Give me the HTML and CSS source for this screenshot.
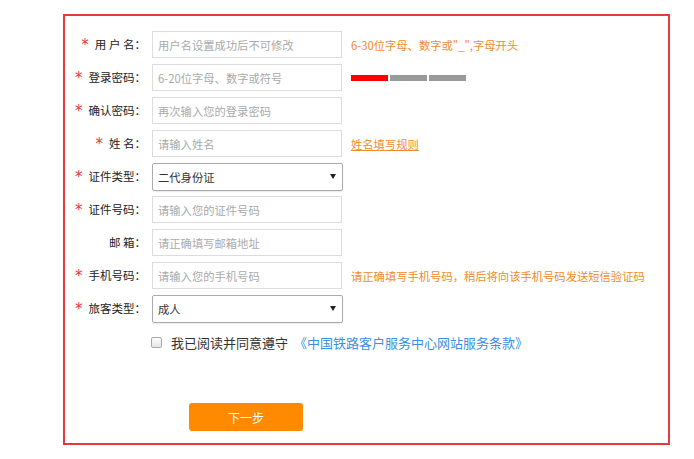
FILE: index.html
```html
<!DOCTYPE html>
<html lang="zh-CN">
<head>
<meta charset="utf-8">
<title>注册</title>
<link rel="stylesheet" href="styles.css">
</head>
<body>
<div class="reg-box">
  <div class="form">
    <div class="row">
      <div class="lbl"><span class="req">*</span><span class="txt">用 户 名：</span></div>
      <input class="ipt" type="text" placeholder="用户名设置成功后不可修改">
      <span class="hint">6-30位字母、数字或"_",字母开头</span>
    </div>
    <div class="row">
      <div class="lbl"><span class="req">*</span><span class="txt">登录密码：</span></div>
      <input class="ipt" type="text" placeholder="6-20位字母、数字或符号">
      <div class="strength"><span class="bar bar-on"></span><span class="bar"></span><span class="bar"></span></div>
    </div>
    <div class="row">
      <div class="lbl"><span class="req">*</span><span class="txt">确认密码：</span></div>
      <input class="ipt" type="text" placeholder="再次输入您的登录密码">
    </div>
    <div class="row">
      <div class="lbl"><span class="req">*</span><span class="txt">姓 名：</span></div>
      <input class="ipt" type="text" placeholder="请输入姓名">
      <a class="hint hint-link" href="#">姓名填写规则</a>
    </div>
    <div class="row">
      <div class="lbl"><span class="req">*</span><span class="txt">证件类型：</span></div>
      <div class="sel"><span class="sel-text">二代身份证</span><span class="arrow"></span></div>
    </div>
    <div class="row">
      <div class="lbl"><span class="req">*</span><span class="txt">证件号码：</span></div>
      <input class="ipt" type="text" placeholder="请输入您的证件号码">
    </div>
    <div class="row">
      <div class="lbl"><span class="txt">邮 箱：</span></div>
      <input class="ipt" type="text" placeholder="请正确填写邮箱地址">
    </div>
    <div class="row">
      <div class="lbl"><span class="req">*</span><span class="txt">手机号码：</span></div>
      <input class="ipt" type="text" placeholder="请输入您的手机号码">
      <span class="hint">请正确填写手机号码，稍后将向该手机号码发送短信验证码</span>
    </div>
    <div class="row">
      <div class="lbl"><span class="req">*</span><span class="txt">旅客类型：</span></div>
      <div class="sel"><span class="sel-text">成人</span><span class="arrow"></span></div>
    </div>
  </div>
  <div class="agree">
    <span class="chk"></span>
    <span class="agree-text">我已阅读并同意遵守</span>
    <a class="agree-link" href="#">《中国铁路客户服务中心网站服务条款》</a>
  </div>
  <div class="btn-row"><button class="btn" type="button">下一步</button></div>
</div>
</body>
</html>
```

FILE: styles.css
```css
* { box-sizing: border-box; }
body {
  margin: 0;
  background: #fff;
  font-family: "Noto Sans CJK SC", "Microsoft YaHei", sans-serif;
  color: #333;
}
.reg-box {
  margin: 14px 0 0 63px;
  width: 607px;
  height: 431px;
  border: 2px solid #e8383d;
  padding-top: 15px;
}
.form {
  display: flex;
  flex-direction: column;
  gap: 6px;
}
.row {
  display: flex;
  align-items: center;
  height: 27px;
}
.lbl {
  width: 81px;
  margin-right: 6px;
  display: flex;
  justify-content: flex-end;
  align-items: center;
  font-size: 11.5px;
  color: #222;
  white-space: nowrap;
}
.req {
  font-family: "DejaVu Sans", sans-serif;
  color: #e8383d;
  font-size: 15px;
  line-height: 1;
  margin-right: 6px;
  position: relative;
  top: 1px;
}
.txt { line-height: 27px; }
.ipt {
  width: 190px;
  height: 27px;
  border: 1px solid #ddd;
  padding: 0 5px;
  margin: 0;
  font-family: inherit;
  font-size: 11.3px;
  color: #333;
  outline: none;
  background: #fff;
}
.ipt::placeholder { color: #aaa; }
.hint {
  margin-left: 9px;
  font-size: 11.3px;
  color: #f08c2c;
  white-space: nowrap;
}
.hint-link { text-decoration: underline; }
.strength {
  margin-left: 9px;
  display: flex;
  gap: 2px;
  margin-top: 1px;
}
.bar {
  width: 37px;
  height: 6px;
  background: #999;
}
.bar-on { background: #ff0000; }
.sel {
  width: 191px;
  height: 28px;
  border: 1px solid #aaa;
  border-radius: 2px;
  box-shadow: 0 1px 1px rgba(0,0,0,0.08);
  display: flex;
  align-items: center;
  justify-content: space-between;
  padding: 0 6px 0 5px;
  font-size: 11.3px;
  color: #333;
}
.arrow {
  width: 0;
  height: 0;
  border-left: 3px solid transparent;
  border-right: 3px solid transparent;
  border-top: 5px solid #222;
}
.agree {
  display: flex;
  align-items: center;
  height: 20px;
  margin-top: 10px;
  padding-left: 86px;
}
.chk {
  width: 11px;
  height: 11px;
  border: 1px solid #a8a8a8;
  border-radius: 2px;
  background: linear-gradient(#fdfdfd, #e6e6e6);
  margin-right: 9px;
}
.agree-text {
  font-size: 13px;
  color: #333;
}
.agree-link {
  margin-left: 6px;
  font-size: 13px;
  color: #3b8fe4;
  text-decoration: none;
}
.btn-row {
  margin-top: 51px;
  padding-left: 124px;
}
.btn {
  width: 114px;
  height: 28px;
  border: 0;
  border-radius: 3px;
  background: #ff8a00;
  color: #fff;
  font-family: inherit;
  font-size: 12px;
  padding: 0;
  cursor: pointer;
}
```
